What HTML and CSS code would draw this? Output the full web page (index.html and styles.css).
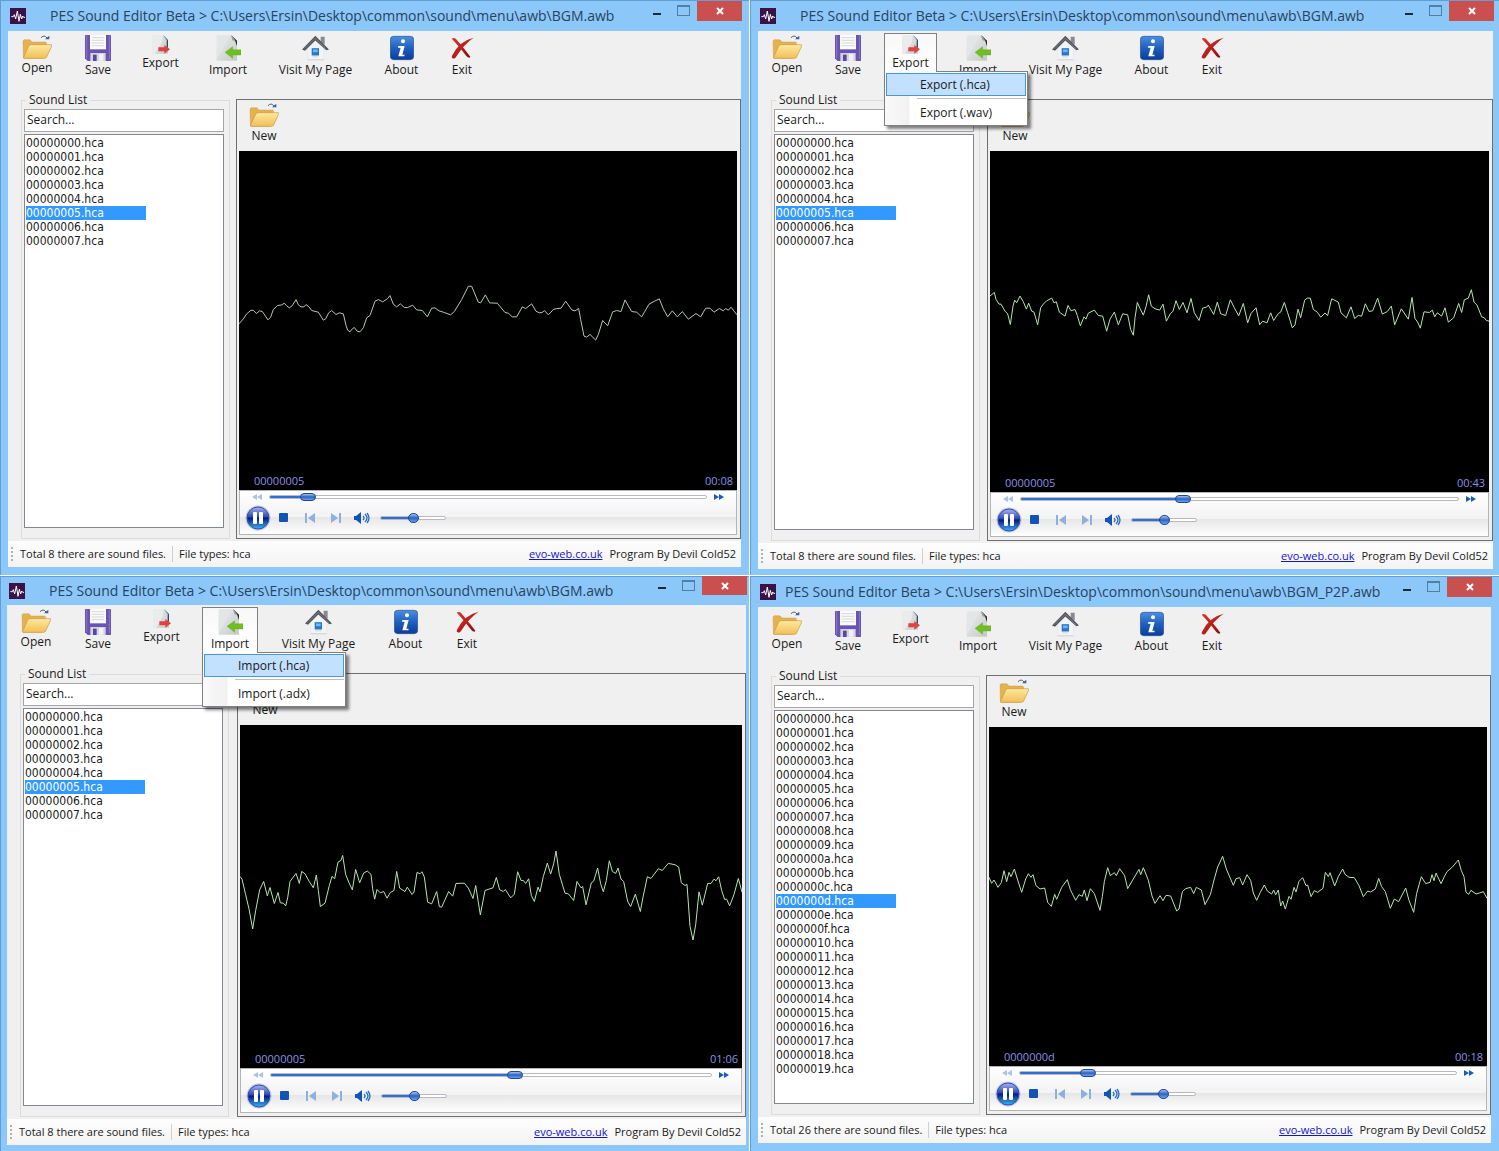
FILE: index.html
```html
<!DOCTYPE html>
<html lang="en">
<head>
<meta charset="utf-8">
<title>PES Sound Editor Beta</title>
<link rel="stylesheet" href="styles.css">
</head>
<body>
<svg class="sprite" aria-hidden="true">
  <defs>
    <linearGradient id="g-folder" x1="0" y1="0" x2="0" y2="1"><stop offset="0" stop-color="#fde9a2"/><stop offset="1" stop-color="#f3bf55"/></linearGradient>
    <linearGradient id="g-page" x1="0" y1="0" x2="1" y2="1"><stop offset="0" stop-color="#f0f1f1"/><stop offset="1" stop-color="#c4c7c8"/></linearGradient>
    <linearGradient id="g-info" x1="0" y1="0" x2="0" y2="1"><stop offset="0" stop-color="#4d8fdb"/><stop offset=".5" stop-color="#1f5fc0"/><stop offset="1" stop-color="#0d3c98"/></linearGradient>
    <linearGradient id="g-red" x1="0" y1="0" x2="1" y2="1"><stop offset="0" stop-color="#e0382e"/><stop offset="1" stop-color="#8e0606"/></linearGradient>
    <linearGradient id="g-play" x1="0" y1="0" x2="0" y2="1"><stop offset="0" stop-color="#a9b6ee"/><stop offset=".45" stop-color="#2b47b8"/><stop offset=".5" stop-color="#07187e"/><stop offset="1" stop-color="#35b5fa"/></linearGradient>
  </defs>
  <symbol id="i-app" viewBox="0 0 48 48"><rect width="48" height="48" fill="#3a1245"/><path d="M4 26h6l3-6 4 13 5-24 5 31 4-21 4 14 3-9 3 4h4" fill="none" stroke="#fff" stroke-width="3"/></symbol>
  <symbol id="i-open" viewBox="0 0 90 72"><path d="M3 18l3-4h18l6 7h40q4 0 4 5l-12 44H7q-3 0-3-4z" fill="#e5b24e" stroke="#b98b38"/><path d="M20 34q2-5 7-5h60q4 0 2 4L74 66q-2 4-6 4H6q-3 0-1-4z" fill="url(#g-folder)" stroke="#c79a45" stroke-width="2"/><path d="M57 8q10-10 18 1" fill="none" stroke="#3d5f8f" stroke-width="3"/><path d="M69 13h13V2z" fill="#3d5f8f"/></symbol>
  <symbol id="i-save" viewBox="0 0 78 78"><path d="M0 2q0-2 2-2h74q2 0 2 2v74q0 2-2 2H8L0 70z" fill="#6a54b2"/><path d="M5 2v68M73 2v70" stroke="#8b79c9" stroke-width="3"/><path d="M15 0h48v43H15z" fill="#fbfbfb"/><path d="M20 8h38M20 16h38M20 24h38M20 32h38" stroke="#d7d7de" stroke-width="3"/><path d="M16 54h46v24H16z" fill="#d5d4e3"/><path d="M24 59h11v19H24z" fill="#5a45a0"/><path d="M42 57h13v20H42z" fill="#f2f2f6"/></symbol>
  <symbol id="i-export" viewBox="0 0 57 57"><path d="M3 1h37l11 14v41H3z" fill="url(#g-page)"/><path d="M3 1h30v20L12 56H3z" fill="#e9ebed"/><path d="M36 0l15 15v23h-4V16z" fill="#2d4f5d"/><path d="M37 2l3 13 9 2z" fill="#b6d9e8"/><path d="M22 37h18v-7l17 13-17 13v-7H22z" fill="#dd4343"/></symbol>
  <symbol id="i-import" viewBox="0 0 78 78"><path d="M5 1h46l15 16v60H5z" fill="url(#g-page)"/><path d="M5 1h40L8 68H5z" fill="#e3e6e6"/><path d="M48 0l18 17v17l-5-15z" fill="#26292b"/><path d="M48 1l4 15 10 2z" fill="#9ca2a5"/><path d="M30 52l23-17v9h25v16H53v10z" fill="#6fbf22" stroke="#58a315"/></symbol>
  <symbol id="i-home" viewBox="0 0 81 75"><path d="M56 4h12v24l-12-9z" fill="#878a8e"/><path d="M17 36L40 15l25 21v37H17z" fill="#f2f5f7" stroke="#d2d8dc"/><path d="M0 42L40 1l41 41-8 2-33-29L9 46z" fill="#54585e"/><path d="M9 39L40 8l31 31" fill="none" stroke="#898e95" stroke-width="2"/><path d="M29 38h22v22H29z" fill="#2c77c4"/><path d="M33 42h14v8H33z" fill="#6db9f4"/><path d="M17 73h48" stroke="#d0d3d6" stroke-width="3"/><path d="M31 64h18" stroke="#c3c8cd" stroke-width="2"/></symbol>
  <symbol id="i-about" viewBox="0 0 72 72"><rect x="1" y="1" width="70" height="70" rx="10" fill="url(#g-info)" stroke="#1d4f9e" stroke-width="2"/><circle cx="39" cy="16" r="6" fill="#fff"/><path d="M25 30h19l-7 26h7l-1 5H25l7-26h-8z" fill="#fff"/></symbol>
  <symbol id="i-exit" viewBox="0 0 69 66"><path d="M2 5Q9 0 15 6q16 18 43 53l-2 3q-6 0-10-5Q22 25 2 5z" fill="url(#g-red)"/><path d="M68 2Q40 20 15 60q-4 6-10 4-5-2-2-8Q24 12 68 2z" fill="url(#g-red)"/></symbol>
  <symbol id="i-rew" viewBox="0 0 10 6"><path d="M5 0v6L0 3zM10 0v6L5 3z" fill="currentColor"/></symbol>
  <symbol id="i-ff" viewBox="0 0 10 6"><path d="M0 0v6l5-3zM5 0v6l5-3z" fill="currentColor"/></symbol>
  <symbol id="i-pause" viewBox="0 0 26 26"><circle cx="13" cy="13" r="12.500" fill="#b9c6e6"/><circle cx="13" cy="13" r="11" fill="url(#g-play)" stroke="#3d4c9c"/><rect x="8" y="7" width="4" height="12" rx="1" fill="#fff"/><rect x="14" y="7" width="4" height="12" rx="1" fill="#fff"/></symbol>
  <symbol id="i-stop" viewBox="0 0 10 10"><rect x="0" y="0" width="9" height="9" rx="1" fill="#1254b4"/></symbol>
  <symbol id="i-prev" viewBox="0 0 12 10"><path d="M1 0h2v10H1zM11 0v10L4 5z" fill="#8fb0dc"/></symbol>
  <symbol id="i-next" viewBox="0 0 12 10"><path d="M9 0h2v10H9zM1 0v10l7-5z" fill="#8fb0dc"/></symbol>
  <symbol id="i-vol" viewBox="0 0 16 12"><path d="M0 4h2l5-4v12L2 8H0z" fill="#1254b4"/><path d="M9 4q2 2 0 4M11 2q4 4 0 8M13 1q4 5 0 10" fill="none" stroke="#2a6cc4" stroke-width="1.300"/></symbol>
</svg>

<main class="desktop">

<section class="window window-a">
  <header class="titlebar">
    <svg class="app-icon"><use href="#i-app"/></svg>
    <h1 class="title">PES Sound Editor Beta &gt; C:\Users\Ersin\Desktop\common\sound\menu\awb\BGM.awb</h1>
    <div class="caption">
      <button class="cap cap-min" type="button" aria-label="Minimize"></button>
      <button class="cap cap-max" type="button" aria-label="Maximize"></button>
      <button class="cap cap-close" type="button" aria-label="Close"><svg viewBox="0 0 8 8"><path d="M1 1l6 6M7 1L1 7"/></svg></button>
    </div>
  </header>
  <div class="client">
    <nav class="toolbar">
      <button class="tool tool-open" type="button"><svg><use href="#i-open"/></svg>Open</button>
      <button class="tool tool-save" type="button"><svg><use href="#i-save"/></svg>Save</button>
      <div class="drop"><button class="tool tool-export" type="button"><svg><use href="#i-export"/></svg>Export</button></div>
      <div class="drop"><button class="tool tool-import" type="button"><svg><use href="#i-import"/></svg>Import</button></div>
      <button class="tool tool-home" type="button"><svg><use href="#i-home"/></svg>Visit My Page</button>
      <button class="tool tool-about" type="button"><svg><use href="#i-about"/></svg>About</button>
      <button class="tool tool-exit" type="button"><svg><use href="#i-exit"/></svg>Exit</button>
    </nav>
    <div class="workspace">
      <fieldset class="sounds">
        <legend>Sound List</legend>
        <input class="search" type="text" aria-label="Search" value="Search...">
        <ul class="files" role="listbox" aria-label="Sound files">
          <li>00000000.hca</li><li>00000001.hca</li><li>00000002.hca</li><li>00000003.hca</li><li>00000004.hca</li><li class="selected">00000005.hca</li><li>00000006.hca</li><li>00000007.hca</li>
        </ul>
      </fieldset>
      <section class="player">
        <div class="player-bar"><button class="tool tool-open" type="button"><svg><use href="#i-open"/></svg>New</button></div>
        <div class="screen">
          <svg class="wave wave-soft" viewBox="12 -357 1494 1020" preserveAspectRatio="none"><polyline points="12,163 25,148 35,133 48,122 56,123 64,132 74,124 82,126 99,151 107,143 115,120 128,108 140,106 148,101 154,108 163,115 172,108 183,90 190,106 198,112 207,112 213,105 222,112 230,123 250,128 265,152 272,148 281,130 290,123 303,135 313,130 325,133 333,168 338,182 345,187 352,178 358,174 366,185 375,187 385,175 395,145 405,138 420,95 430,90 443,97 458,87 465,78 475,104 485,112 496,103 508,114 518,114 533,107 545,121 562,123 577,142 590,116 600,115 612,124 625,128 647,136 658,126 680,90 700,50 710,50 730,98 737,100 751,76 764,100 787,101 810,129 820,131 832,142 845,142 862,112 872,117 890,103 903,125 913,130 923,128 928,123 940,136 955,120 965,117 978,116 992,95 1010,121 1020,124 1031,117 1037,150 1047,200 1055,203 1065,195 1082,212 1090,195 1103,153 1118,169 1133,127 1145,123 1158,126 1170,91 1184,116 1190,126 1205,128 1220,142 1242,104 1258,95 1273,88 1285,118 1298,142 1312,124 1327,142 1342,126 1360,149 1383,132 1397,142 1412,116 1425,116 1437,128 1453,117 1465,124 1472,117 1480,122 1488,113 1506,136"/></svg>
          <p class="info"><span>00000005</span><span>00:08</span></p>
        </div>
        <div class="controls">
          <div class="seek-row"><svg class="skip dim"><use href="#i-rew"/></svg><input class="range seek" type="range" aria-label="Position" min="0" max="1000" value="71" style="--fill:9%"><svg class="skip"><use href="#i-ff"/></svg></div>
          <div class="play-row">
            <button class="ctl" type="button" aria-label="Pause"><svg class="ic-pause"><use href="#i-pause"/></svg></button>
            <button class="ctl" type="button" aria-label="Stop"><svg class="ic-stop"><use href="#i-stop"/></svg></button>
            <button class="ctl" type="button" aria-label="Previous"><svg class="ic-skip"><use href="#i-prev"/></svg></button>
            <button class="ctl" type="button" aria-label="Next"><svg class="ic-skip"><use href="#i-next"/></svg></button>
            <button class="ctl" type="button" aria-label="Mute"><svg class="ic-vol"><use href="#i-vol"/></svg></button>
            <input class="range volume" type="range" aria-label="Volume" value="50" style="--fill:50%">
          </div>
        </div>
      </section>
    </div>
    <footer class="status"><i class="grip"></i><span class="total">Total 8 there are sound files.</span><span class="types">File types: hca</span><a href="#evo-web">evo-web.co.uk</a><span>Program By Devil Cold52</span></footer>
  </div>
</section>

<section class="window window-b">
  <header class="titlebar">
    <svg class="app-icon"><use href="#i-app"/></svg>
    <h1 class="title">PES Sound Editor Beta &gt; C:\Users\Ersin\Desktop\common\sound\menu\awb\BGM.awb</h1>
    <div class="caption">
      <button class="cap cap-min" type="button" aria-label="Minimize"></button>
      <button class="cap cap-max" type="button" aria-label="Maximize"></button>
      <button class="cap cap-close" type="button" aria-label="Close"><svg viewBox="0 0 8 8"><path d="M1 1l6 6M7 1L1 7"/></svg></button>
    </div>
  </header>
  <div class="client">
    <nav class="toolbar">
      <button class="tool tool-open" type="button"><svg><use href="#i-open"/></svg>Open</button>
      <button class="tool tool-save" type="button"><svg><use href="#i-save"/></svg>Save</button>
      <div class="drop open">
        <button class="tool tool-export" type="button" aria-expanded="true"><svg><use href="#i-export"/></svg>Export</button>
        <div class="menu" role="menu"><button class="item active" type="button" role="menuitem">Export (.hca)</button><hr><button class="item" type="button" role="menuitem">Export (.wav)</button></div>
      </div>
      <div class="drop"><button class="tool tool-import" type="button"><svg><use href="#i-import"/></svg>Import</button></div>
      <button class="tool tool-home" type="button"><svg><use href="#i-home"/></svg>Visit My Page</button>
      <button class="tool tool-about" type="button"><svg><use href="#i-about"/></svg>About</button>
      <button class="tool tool-exit" type="button"><svg><use href="#i-exit"/></svg>Exit</button>
    </nav>
    <div class="workspace">
      <fieldset class="sounds">
        <legend>Sound List</legend>
        <input class="search" type="text" aria-label="Search" value="Search...">
        <ul class="files" role="listbox" aria-label="Sound files">
          <li>00000000.hca</li><li>00000001.hca</li><li>00000002.hca</li><li>00000003.hca</li><li>00000004.hca</li><li class="selected">00000005.hca</li><li>00000006.hca</li><li>00000007.hca</li>
        </ul>
      </fieldset>
      <section class="player">
        <div class="player-bar"><button class="tool tool-open" type="button"><svg><use href="#i-open"/></svg>New</button></div>
        <div class="screen">
          <svg class="wave" viewBox="15 -354 1497 1020" preserveAspectRatio="none"><polyline points="15,80 28,69 33,90 42,104 48,104 60,125 68,133 76,165 84,110 89,92 95,100 105,80 115,97 124,119 131,101 140,125 147,128 158,166 167,115 175,104 185,94 200,86 207,100 214,97 223,128 240,140 249,108 258,124 270,120 277,138 286,169 297,142 303,149 310,131 328,122 340,138 353,140 365,185 375,149 388,128 400,166 413,133 428,136 437,180 445,197 450,145 457,99 466,119 475,137 483,112 491,76 499,110 510,118 524,122 534,104 544,155 556,133 564,125 573,94 583,120 594,99 606,130 618,87 628,130 642,153 653,116 665,113 670,107 686,135 697,98 707,133 722,138 736,91 748,115 761,139 775,102 788,160 798,132 813,115 824,166 833,155 846,160 857,130 866,153 880,132 887,128 898,99 908,130 922,175 930,166 939,119 947,145 959,92 967,86 976,86 985,120 997,128 1007,143 1020,131 1028,138 1040,88 1060,98 1068,130 1084,145 1098,112 1109,147 1120,138 1130,140 1141,103 1152,126 1163,124 1178,86 1192,134 1207,126 1219,110 1229,166 1249,118 1270,149 1281,84 1290,147 1298,158 1306,176 1317,127 1333,129 1342,122 1349,142 1357,130 1370,140 1380,115 1390,158 1406,145 1421,102 1430,129 1438,91 1450,86 1459,61 1467,98 1476,107 1490,142 1498,145 1504,153 1512,155"/></svg>
          <p class="info"><span>00000005</span><span>00:43</span></p>
        </div>
        <div class="controls">
          <div class="seek-row"><svg class="skip dim"><use href="#i-rew"/></svg><input class="range seek" type="range" aria-label="Position" min="0" max="1000" value="366" style="--fill:37%"><svg class="skip"><use href="#i-ff"/></svg></div>
          <div class="play-row">
            <button class="ctl" type="button" aria-label="Pause"><svg class="ic-pause"><use href="#i-pause"/></svg></button>
            <button class="ctl" type="button" aria-label="Stop"><svg class="ic-stop"><use href="#i-stop"/></svg></button>
            <button class="ctl" type="button" aria-label="Previous"><svg class="ic-skip"><use href="#i-prev"/></svg></button>
            <button class="ctl" type="button" aria-label="Next"><svg class="ic-skip"><use href="#i-next"/></svg></button>
            <button class="ctl" type="button" aria-label="Mute"><svg class="ic-vol"><use href="#i-vol"/></svg></button>
            <input class="range volume" type="range" aria-label="Volume" value="50" style="--fill:50%">
          </div>
        </div>
      </section>
    </div>
    <footer class="status"><i class="grip"></i><span class="total">Total 8 there are sound files.</span><span class="types">File types: hca</span><a href="#evo-web">evo-web.co.uk</a><span>Program By Devil Cold52</span></footer>
  </div>
</section>

<section class="window window-c">
  <header class="titlebar">
    <svg class="app-icon"><use href="#i-app"/></svg>
    <h1 class="title">PES Sound Editor Beta &gt; C:\Users\Ersin\Desktop\common\sound\menu\awb\BGM.awb</h1>
    <div class="caption">
      <button class="cap cap-min" type="button" aria-label="Minimize"></button>
      <button class="cap cap-max" type="button" aria-label="Maximize"></button>
      <button class="cap cap-close" type="button" aria-label="Close"><svg viewBox="0 0 8 8"><path d="M1 1l6 6M7 1L1 7"/></svg></button>
    </div>
  </header>
  <div class="client">
    <nav class="toolbar">
      <button class="tool tool-open" type="button"><svg><use href="#i-open"/></svg>Open</button>
      <button class="tool tool-save" type="button"><svg><use href="#i-save"/></svg>Save</button>
      <div class="drop"><button class="tool tool-export" type="button"><svg><use href="#i-export"/></svg>Export</button></div>
      <div class="drop open">
        <button class="tool tool-import" type="button" aria-expanded="true"><svg><use href="#i-import"/></svg>Import</button>
        <div class="menu" role="menu"><button class="item active" type="button" role="menuitem">Import (.hca)</button><hr><button class="item" type="button" role="menuitem">Import (.adx)</button></div>
      </div>
      <button class="tool tool-home" type="button"><svg><use href="#i-home"/></svg>Visit My Page</button>
      <button class="tool tool-about" type="button"><svg><use href="#i-about"/></svg>About</button>
      <button class="tool tool-exit" type="button"><svg><use href="#i-exit"/></svg>Exit</button>
    </nav>
    <div class="workspace">
      <fieldset class="sounds">
        <legend>Sound List</legend>
        <input class="search" type="text" aria-label="Search" value="Search...">
        <ul class="files" role="listbox" aria-label="Sound files">
          <li>00000000.hca</li><li>00000001.hca</li><li>00000002.hca</li><li>00000003.hca</li><li>00000004.hca</li><li class="selected">00000005.hca</li><li>00000006.hca</li><li>00000007.hca</li>
        </ul>
      </fieldset>
      <section class="player">
        <div class="player-bar"><button class="tool tool-open" type="button"><svg><use href="#i-open"/></svg>New</button></div>
        <div class="screen">
          <svg class="wave" viewBox="15 -315 1506 1026" preserveAspectRatio="none"><polyline points="15,138 21,146 32,193 42,235 53,295 62,240 74,178 86,153 97,196 105,171 118,219 129,186 136,217 145,218 152,226 158,202 165,153 183,129 193,159 200,123 210,130 222,152 235,172 244,134 250,180 256,228 270,218 283,165 291,138 299,145 309,95 318,90 323,75 332,132 342,157 352,178 362,117 374,157 386,128 397,122 408,132 413,175 419,206 426,177 436,187 446,183 456,203 466,186 477,180 485,123 494,173 510,183 517,170 531,192 537,185 546,126 555,130 561,124 568,140 578,215 590,220 605,183 613,228 620,230 641,183 653,197 663,159 688,158 700,173 714,204 722,165 736,253 750,180 774,172 784,141 794,178 805,183 811,177 827,202 838,191 848,124 858,150 865,150 872,159 881,145 889,195 898,213 909,170 915,184 925,138 937,98 947,131 956,100 963,62 973,132 990,188 1000,190 1016,210 1026,153 1038,172 1043,168 1053,223 1069,157 1076,152 1088,113 1097,160 1105,184 1114,150 1123,91 1132,123 1142,129 1149,113 1158,146 1166,153 1178,213 1187,228 1201,191 1216,243 1224,200 1237,139 1248,144 1270,115 1282,120 1300,99 1320,103 1331,110 1339,157 1350,165 1356,162 1365,287 1374,328 1382,283 1392,184 1402,224 1418,159 1428,159 1437,146 1443,151 1451,139 1460,180 1469,207 1475,206 1484,226 1497,192 1510,144 1521,185"/></svg>
          <p class="info"><span>00000005</span><span>01:06</span></p>
        </div>
        <div class="controls">
          <div class="seek-row"><svg class="skip dim"><use href="#i-rew"/></svg><input class="range seek" type="range" aria-label="Position" min="0" max="1000" value="556" style="--fill:55%"><svg class="skip"><use href="#i-ff"/></svg></div>
          <div class="play-row">
            <button class="ctl" type="button" aria-label="Pause"><svg class="ic-pause"><use href="#i-pause"/></svg></button>
            <button class="ctl" type="button" aria-label="Stop"><svg class="ic-stop"><use href="#i-stop"/></svg></button>
            <button class="ctl" type="button" aria-label="Previous"><svg class="ic-skip"><use href="#i-prev"/></svg></button>
            <button class="ctl" type="button" aria-label="Next"><svg class="ic-skip"><use href="#i-next"/></svg></button>
            <button class="ctl" type="button" aria-label="Mute"><svg class="ic-vol"><use href="#i-vol"/></svg></button>
            <input class="range volume" type="range" aria-label="Volume" value="50" style="--fill:50%">
          </div>
        </div>
      </section>
    </div>
    <footer class="status"><i class="grip"></i><span class="total">Total 8 there are sound files.</span><span class="types">File types: hca</span><a href="#evo-web">evo-web.co.uk</a><span>Program By Devil Cold52</span></footer>
  </div>
</section>

<section class="window window-d">
  <header class="titlebar">
    <svg class="app-icon"><use href="#i-app"/></svg>
    <h1 class="title">PES Sound Editor Beta &gt; C:\Users\Ersin\Desktop\common\sound\menu\awb\BGM_P2P.awb</h1>
    <div class="caption">
      <button class="cap cap-min" type="button" aria-label="Minimize"></button>
      <button class="cap cap-max" type="button" aria-label="Maximize"></button>
      <button class="cap cap-close" type="button" aria-label="Close"><svg viewBox="0 0 8 8"><path d="M1 1l6 6M7 1L1 7"/></svg></button>
    </div>
  </header>
  <div class="client">
    <nav class="toolbar">
      <button class="tool tool-open" type="button"><svg><use href="#i-open"/></svg>Open</button>
      <button class="tool tool-save" type="button"><svg><use href="#i-save"/></svg>Save</button>
      <div class="drop"><button class="tool tool-export" type="button"><svg><use href="#i-export"/></svg>Export</button></div>
      <div class="drop"><button class="tool tool-import" type="button"><svg><use href="#i-import"/></svg>Import</button></div>
      <button class="tool tool-home" type="button"><svg><use href="#i-home"/></svg>Visit My Page</button>
      <button class="tool tool-about" type="button"><svg><use href="#i-about"/></svg>About</button>
      <button class="tool tool-exit" type="button"><svg><use href="#i-exit"/></svg>Exit</button>
    </nav>
    <div class="workspace">
      <fieldset class="sounds">
        <legend>Sound List</legend>
        <input class="search" type="text" aria-label="Search" value="Search...">
        <ul class="files" role="listbox" aria-label="Sound files">
          <li>00000000.hca</li><li>00000001.hca</li><li>00000002.hca</li><li>00000003.hca</li><li>00000004.hca</li><li>00000005.hca</li><li>00000006.hca</li><li>00000007.hca</li><li>00000008.hca</li><li>00000009.hca</li><li>0000000a.hca</li><li>0000000b.hca</li><li>0000000c.hca</li><li class="selected">0000000d.hca</li><li>0000000e.hca</li><li>0000000f.hca</li><li>00000010.hca</li><li>00000011.hca</li><li>00000012.hca</li><li>00000013.hca</li><li>00000014.hca</li><li>00000015.hca</li><li>00000016.hca</li><li>00000017.hca</li><li>00000018.hca</li><li>00000019.hca</li>
        </ul>
      </fieldset>
      <section class="player">
        <div class="player-bar"><button class="tool tool-open" type="button"><svg><use href="#i-open"/></svg>New</button></div>
        <div class="screen">
          <svg class="wave" viewBox="12 -339 1494 1017" preserveAspectRatio="none"><polyline points="12,112 20,130 27,120 39,142 49,128 57,92 65,125 72,97 78,110 88,87 98,120 110,157 122,117 130,101 138,112 144,104 153,137 165,147 179,144 188,187 199,199 209,163 215,178 230,142 247,119 256,149 272,181 282,164 292,169 298,150 306,182 316,146 328,161 345,211 352,170 358,125 368,83 376,107 388,98 394,107 404,86 419,107 428,146 443,120 462,88 467,104 475,83 490,121 501,168 510,190 525,167 534,182 543,166 557,168 575,213 582,207 592,155 602,146 617,142 626,161 634,142 649,150 660,194 676,164 687,120 698,81 713,49 724,87 745,136 753,116 764,113 773,135 786,104 797,121 805,159 815,181 826,157 838,135 847,153 860,162 866,150 872,164 880,150 887,198 893,183 901,207 912,169 918,178 927,142 933,156 942,124 953,113 963,137 968,135 978,170 988,152 998,157 1014,145 1021,97 1030,110 1035,98 1049,138 1060,110 1073,87 1080,103 1092,112 1108,113 1122,137 1135,170 1148,153 1157,156 1171,147 1181,115 1190,140 1201,155 1216,205 1228,177 1241,185 1262,144 1272,181 1286,217 1295,160 1309,110 1322,131 1335,127 1341,104 1347,122 1353,99 1368,131 1378,110 1386,95 1402,81 1420,60 1429,92 1437,110 1443,157 1451,163 1458,151 1473,162 1483,159 1495,155 1506,175"/></svg>
          <p class="info"><span>0000000d</span><span>00:18</span></p>
        </div>
        <div class="controls">
          <div class="seek-row"><svg class="skip dim"><use href="#i-rew"/></svg><input class="range seek" type="range" aria-label="Position" min="0" max="1000" value="144" style="--fill:16%"><svg class="skip"><use href="#i-ff"/></svg></div>
          <div class="play-row">
            <button class="ctl" type="button" aria-label="Pause"><svg class="ic-pause"><use href="#i-pause"/></svg></button>
            <button class="ctl" type="button" aria-label="Stop"><svg class="ic-stop"><use href="#i-stop"/></svg></button>
            <button class="ctl" type="button" aria-label="Previous"><svg class="ic-skip"><use href="#i-prev"/></svg></button>
            <button class="ctl" type="button" aria-label="Next"><svg class="ic-skip"><use href="#i-next"/></svg></button>
            <button class="ctl" type="button" aria-label="Mute"><svg class="ic-vol"><use href="#i-vol"/></svg></button>
            <input class="range volume" type="range" aria-label="Volume" value="50" style="--fill:50%">
          </div>
        </div>
      </section>
    </div>
    <footer class="status"><i class="grip"></i><span class="total">Total 26 there are sound files.</span><span class="types">File types: hca</span><a href="#evo-web">evo-web.co.uk</a><span>Program By Devil Cold52</span></footer>
  </div>
</section>

</main>
</body>
</html>
```
FILE: styles.css
```css
* { box-sizing: border-box; }

body {
  margin: 0;
  background: #fff;
  color: #1a1a1a;
  font: 12px/16px "Open Sans", "Noto Sans", sans-serif;
}

button, input { font: inherit; color: inherit; }
button { border: 0; padding: 0; background: none; }
svg { display: block; }
.sprite { position: absolute; width: 0; height: 0; }

.desktop {
  display: grid;
  grid-template-columns: repeat(2, minmax(0, 1fr));
  grid-template-rows: 1fr 1fr;
  gap: 1px;
  min-height: 100vh;
}

/* Window frame; each window sets its own border widths */
.window {
  --left: 8px;
  --right: 8px;
  --bottom: 8px;
  --bar: 31px;
  --title-gap: 24px;
  --tool-gap: 13px;
  --pane-gap: 6px;
  display: flex;
  flex-direction: column;
  padding: 0 var(--right) var(--bottom) var(--left);
  background: #8bc7f9;
  box-shadow: inset 1px 1px #5f9fd4;
}
.window-b { --right: 6px; --bottom: 6px; --pane-gap: 7px; }
.window-c { --left: 7px; --right: 3px; --bottom: 6px; --bar: 29px; --tool-gap: 14px; --pane-gap: 8px; }
.window-d { --title-gap: 9px; }

.titlebar {
  display: flex;
  height: var(--bar);
  align-items: center;
  padding-left: 2px;
}
.app-icon { width: 16px; height: 16px; flex: none; }
.title {
  margin: 0 0 0 var(--title-gap);
  flex: 1;
  min-width: 0;
  font-size: 14px;
  line-height: 20px;
  font-weight: 400;
  color: #29435d;
  white-space: nowrap;
}
.caption {
  display: flex;
  align-self: flex-start;
  height: 21px;
  margin-right: -1px;
  padding-top: 1px;
}
.window-c .caption { height: 19px; padding-top: 0; }
.cap { display: flex; width: 27px; align-items: center; justify-content: center; }
.cap-min::before { content: ""; width: 8px; height: 2px; margin-top: 5px; background: #1c2a38; }
.cap-max::before { content: ""; width: 11px; height: 8px; margin-bottom: 1px; border: 1px solid #527ea6; border-top-width: 2px; }
.cap-close { width: 45px; background: #c9504f; }
.cap-close svg { width: 8px; height: 8px; fill: none; stroke: #fff; stroke-width: 2; }

.client {
  display: flex;
  flex: 1;
  flex-direction: column;
  background: #f0f0f0;
}

/* Toolbar */
.toolbar {
  display: flex;
  height: 61px;
  align-items: flex-start;
  padding: 2px 0 0 4px;
  gap: var(--tool-gap);
}
.drop { position: relative; }
.tool {
  display: flex;
  flex-direction: column;
  align-items: center;
  gap: 1px;
  border: 1px solid transparent;
  padding: 1px 0;
  white-space: nowrap;
}
.tool-open { width: 50px; }
.tool-save { width: 46px; }
.tool-export { width: 53px; }
.tool-import { width: 56px; }
.tool-home { width: 93px; }
.tool-about { width: 53px; }
.tool-exit { width: 42px; }
.tool-open svg { width: 30px; height: 24px; }
.tool-save svg, .tool-import svg { width: 26px; height: 26px; }
.tool-export svg { width: 19px; height: 19px; }
.tool-home svg { width: 27px; height: 26px; }
.tool-about svg { width: 24px; height: 26px; }
.tool-exit svg { width: 23px; height: 26px; }

.open .tool {
  position: relative;
  z-index: 3;
  border-color: #808080;
  border-bottom: 0;
  background: linear-gradient(#f8f8f8, #fff);
}
.menu {
  position: absolute;
  z-index: 2;
  top: calc(100% - 1px);
  left: 0;
  width: 144px;
  border: 1px solid #808080;
  padding: 1px;
  background: linear-gradient(90deg, #fafafa, #f1f1f1 24px, #fff 25px);
  box-shadow: 3px 3px 3px rgba(0, 0, 0, .5);
}
.item {
  display: block;
  width: 100%;
  height: 23px;
  border: 1px solid transparent;
  padding-left: 33px;
  text-align: left;
  white-space: nowrap;
}
.item.active { border-color: #4a96d6; background: #c2e0ff; }
.menu hr { height: 1px; margin: 2px 0 2px 31px; border: 0; background: #bdbdbd; }

/* Sound list */
.workspace { display: flex; flex: 1; gap: var(--pane-gap); padding: 0 0 2px 13px; }
.sounds {
  display: flex;
  flex-direction: column;
  flex: none;
  width: 209px;
  margin: 0;
  border: 1px solid #dcdcdc;
  padding: 0 5px 10px 2px;
}
.sounds legend { height: 16px; margin-left: 2px; padding: 0 3px; }
.search {
  width: 100%;
  height: 23px;
  margin: 1px 0 2px;
  border: 1px solid #a5a5a5;
  padding: 0 2px 2px;
  background: #fff;
}
.files {
  flex: 1;
  margin: 0;
  border: 1px solid #828790;
  padding: 1px;
  background: #fff;
  list-style: none;
  font-family: "DejaVu Sans Condensed", "Noto Sans", sans-serif;
  line-height: 14px;
}
.files li { width: 120px; }
.files .selected { background: #3399ff; color: #fff; }

/* Player */
.player {
  display: flex;
  flex: 1;
  flex-direction: column;
  min-width: 0;
  margin-top: 7px;
  border: 1px solid #6e6e6e;
  padding: 0 3px 3px 2px;
}
.player-bar { height: 51px; padding-top: 1px; }
.screen { display: grid; flex: 1; background: #000; }
.wave, .info { grid-area: 1 / 1; }
.wave { width: 100%; height: 0; min-height: 100%; fill: none; stroke: #b4e6ae; stroke-width: 1px; }
.wave-soft { stroke: #b4c9b1; }
.wave polyline { vector-effect: non-scaling-stroke; }
.info {
  display: flex;
  align-self: end;
  justify-content: space-between;
  margin: 0;
  padding: 0 4px 2px 15px;
  font-size: 11px;
  line-height: 14px;
  color: #8f8fe0;
}
.controls {
  height: 45px;
  border: 1px solid #b5b5b5;
  background: linear-gradient(#fff, #f3f3f3 60%, #e6e6e6 61%, #fff);
}
.seek-row { display: flex; height: 12px; align-items: center; gap: 7px; padding: 0 12px; }
.skip { width: 10px; height: 6px; flex: none; color: #1a5cb8; }
.skip.dim { color: #a9c4e4; }
.play-row { display: flex; height: 29px; align-items: center; padding-left: 5px; }
.ctl { display: flex; width: 26px; height: 26px; align-items: center; justify-content: center; }
.ic-pause { width: 26px; height: 26px; }
.ic-stop { width: 10px; height: 10px; }
.ic-skip { width: 12px; height: 10px; }
.ic-vol { width: 16px; height: 12px; }

.range { appearance: none; height: 12px; margin: 0; background: none; }
.range::-webkit-slider-runnable-track {
  height: 4px;
  border: 1px solid #b8b8c0;
  border-radius: 2px;
  background: linear-gradient(90deg, #2d6fd2 var(--fill), #fff var(--fill));
}
.range::-webkit-slider-thumb {
  appearance: none;
  height: 8px;
  margin-top: -3px;
  border: 1px solid #1d4796;
  border-radius: 4px;
  background: linear-gradient(#a9bfe8, #2b62c4 50%, #6aa4ee);
}
.seek { flex: 1; min-width: 0; }
.seek::-webkit-slider-thumb { width: 16px; }
.volume { width: 66px; margin-left: 5px; }
.volume::-webkit-slider-thumb { width: 11px; height: 10px; margin-top: -4px; border-radius: 5px; }

/* Status bar */
.status {
  display: flex;
  height: 26px;
  align-items: center;
  padding: 0 5px 0 3px;
  background: linear-gradient(#fdfdfd, #f3f3f3);
  font-size: 11px;
  white-space: nowrap;
}
.grip { width: 2px; height: 14px; margin-right: 7px; background: repeating-linear-gradient(#b0b0b0 0 2px, transparent 2px 4px); }
.total { padding-right: 6px; border-right: 1px solid #cfcfcf; }
.types { flex: 1; padding-left: 6px; }
.status a { margin-right: 7px; color: #1414c8; }
```
